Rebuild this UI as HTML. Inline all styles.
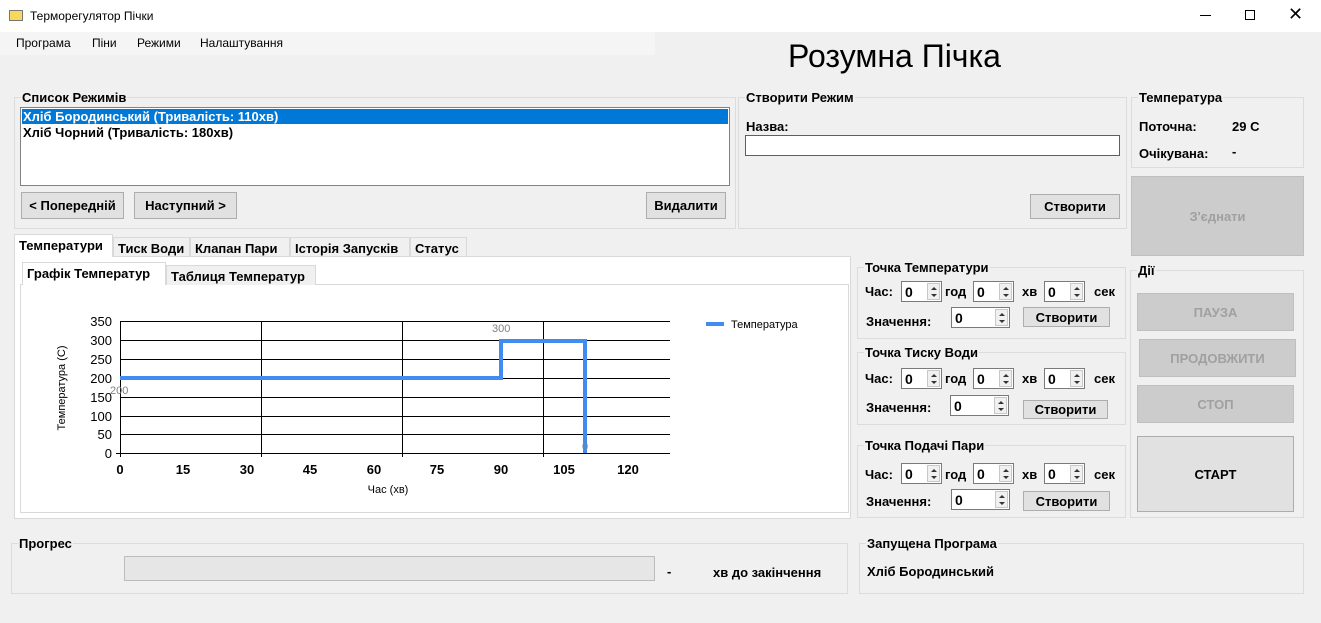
<!DOCTYPE html>
<html><head><meta charset="utf-8"><style>
*{box-sizing:border-box;margin:0;padding:0}
body{width:1321px;height:623px;background:#f0f0f0;font-family:"Liberation Sans",sans-serif;font-size:13px;position:relative;overflow:hidden;color:#000}
.a{position:absolute;white-space:nowrap}
.b{font-weight:bold}
.g{position:absolute;border:1px solid #dcdcdc}
.gt{position:absolute;top:-8px;left:6px;background:#f0f0f0;font-weight:bold;padding:0 1px}
.btn{position:absolute;background:#e1e1e1;border:1px solid #adadad;font-weight:bold;text-align:center;display:flex;align-items:center;justify-content:center}
.dis{background:#cccccc;border:1px solid #bfbfbf;color:#a0a0a0}
.sp{position:absolute;height:21px;background:#fff;border:1px solid #7a7a7a;font-weight:bold;padding:2px 0 0 3px;font-size:14px}
.sp i{position:absolute;right:1px;top:1px;width:13px;height:17px;background:#f0f0f0;border:1px solid #c8c8c8;font-style:normal}
.sp i:before{content:"";position:absolute;left:3px;top:3px;border:3px solid transparent;border-bottom:3px solid #333;border-top:0}
.sp i:after{content:"";position:absolute;left:3px;top:10px;border:3px solid transparent;border-top:3px solid #333;border-bottom:0}
.tab{position:absolute;border:1px solid #d9d9d9;border-bottom:none;background:#f0f0f0;font-weight:bold;padding:3px 4px 0}
</style></head><body>
<div class="a" style="left:0;top:0;width:1321px;height:32px;background:#fff"></div>
<div class="a" style="left:9px;top:10px;width:14px;height:11px;background:#f8d75a;border:1px solid #777"></div>
<div class="a" style="left:30px;top:9px;font-size:12px">Терморегулятор Пічки</div>
<div class="a" style="left:1200px;top:15px;width:11px;height:1px;background:#000"></div>
<div class="a" style="left:1245px;top:10px;width:10px;height:10px;border:1px solid #000"></div>
<div class="a" style="left:1288px;top:4px;font-size:18px">✕</div>
<div class="a" style="left:0;top:32px;width:655px;height:23px;background:#f5f5f5"></div>
<div class="a" style="left:16px;top:36px;font-size:12px">Програма</div>
<div class="a" style="left:92px;top:36px;font-size:12px">Піни</div>
<div class="a" style="left:137px;top:36px;font-size:12px">Режими</div>
<div class="a" style="left:200px;top:36px;font-size:12px">Налаштування</div>
<div class="a" style="left:788px;top:38px;font-size:32px">Розумна Пічка</div>

<div class="g" style="left:14px;top:97px;width:722px;height:132px"><div class="gt">Список Режимів</div></div>
<div class="a" style="left:20px;top:107px;width:710px;height:79px;background:#fff;border:1px solid #828282"></div>
<div class="a b" style="left:22px;top:109px;width:706px;height:15px;background:#0078d7;color:#fff;padding-left:1px;line-height:15px">Хліб Бородинський (Тривалість: 110хв)</div>
<div class="a b" style="left:23px;top:125px;line-height:15px">Хліб Чорний (Тривалість: 180хв)</div>
<div class="btn" style="left:21px;top:192px;width:103px;height:27px">&lt; Попередній</div>
<div class="btn" style="left:134px;top:192px;width:103px;height:27px">Наступний &gt;</div>
<div class="btn" style="left:646px;top:192px;width:80px;height:27px">Видалити</div>

<div class="g" style="left:738px;top:97px;width:389px;height:132px"><div class="gt">Створити Режим</div></div>
<div class="a b" style="left:746px;top:119px">Назва:</div>
<div class="a" style="left:745px;top:135px;width:375px;height:21px;background:#fff;border:1px solid #0078d7"></div>
<div class="btn" style="left:1030px;top:194px;width:90px;height:25px">Створити</div>

<div class="g" style="left:1131px;top:97px;width:173px;height:71px"><div class="gt">Температура</div></div>
<div class="a b" style="left:1139px;top:119px">Поточна:</div>
<div class="a b" style="left:1232px;top:119px">29 C</div>
<div class="a b" style="left:1139px;top:146px">Очікувана:</div>
<div class="a b" style="left:1232px;top:144px">-</div>
<div class="btn dis" style="left:1131px;top:176px;width:173px;height:80px;font-weight:bold">З'єднати</div>

<div class="a" style="left:14px;top:256px;width:837px;height:263px;background:#fff;border:1px solid #d9d9d9"></div>
<div class="tab" style="left:14px;top:234px;width:99px;height:23px;background:#fff;z-index:2">Температури</div>
<div class="tab" style="left:113px;top:237px;width:77px;height:19px">Тиск Води</div>
<div class="tab" style="left:190px;top:237px;width:100px;height:19px">Клапан Пари</div>
<div class="tab" style="left:290px;top:237px;width:120px;height:19px">Історія Запусків</div>
<div class="tab" style="left:410px;top:237px;width:57px;height:19px">Статус</div>
<div class="a" style="left:20px;top:284px;width:829px;height:229px;border:1px solid #d9d9d9;background:#fff"></div>
<div class="tab" style="left:22px;top:262px;width:144px;height:23px;background:#fff;z-index:2">Графік Температур</div>
<div class="tab" style="left:166px;top:265px;width:150px;height:20px">Таблиця Температур</div>

<svg class="a" style="left:0;top:0" width="1321" height="623">
<g stroke="#000" stroke-width="1">
<line x1="120" y1="321.5" x2="670" y2="321.5"/><line x1="120" y1="340.5" x2="670" y2="340.5"/><line x1="120" y1="359.5" x2="670" y2="359.5"/><line x1="120" y1="378.5" x2="670" y2="378.5"/><line x1="120" y1="397.5" x2="670" y2="397.5"/><line x1="120" y1="416.5" x2="670" y2="416.5"/><line x1="120" y1="434.5" x2="670" y2="434.5"/><line x1="116" y1="453.5" x2="670" y2="453.5"/>
<line x1="120.5" y1="321" x2="120.5" y2="457"/><line x1="261.5" y1="321" x2="261.5" y2="457"/><line x1="402.5" y1="321" x2="402.5" y2="457"/><line x1="543.5" y1="321" x2="543.5" y2="457"/>
</g>
<polyline points="120,378 501,378 501,341 585,341 585,453" fill="none" stroke="#418cf0" stroke-width="4"/>
<line x1="706" y1="324" x2="724" y2="324" stroke="#418cf0" stroke-width="4"/>
<g font-family="Liberation Sans" font-size="13" text-anchor="end">
<text x="112" y="326">350</text><text x="112" y="345">300</text><text x="112" y="364">250</text><text x="112" y="383">200</text><text x="112" y="402">150</text><text x="112" y="421">100</text><text x="112" y="439">50</text><text x="112" y="458">0</text></g>
<g font-family="Liberation Sans" font-size="13" font-weight="bold" text-anchor="middle">
<text x="120" y="474">0</text><text x="183" y="474">15</text><text x="247" y="474">30</text><text x="310" y="474">45</text><text x="374" y="474">60</text><text x="437" y="474">75</text><text x="501" y="474">90</text><text x="564" y="474">105</text><text x="628" y="474">120</text></g>
<g font-family="Liberation Sans" font-size="11" fill="#808080"><text x="110" y="394">200</text><text x="492" y="332">300</text><text x="582" y="450">0</text></g>
<text x="731" y="328" font-family="Liberation Sans" font-size="11">Температура</text>
<text x="388" y="493" font-family="Liberation Sans" font-size="11" text-anchor="middle">Час (хв)</text>
<text transform="translate(65,388) rotate(-90)" font-family="Liberation Sans" font-size="11" text-anchor="middle">Температура (С)</text>
</svg>

<div class="g" style="left:857px;top:267px;width:269px;height:72px"><div class="gt">Точка Температури</div></div>
<div class="g" style="left:857px;top:352px;width:269px;height:73px"><div class="gt">Точка Тиску Води</div></div>
<div class="g" style="left:857px;top:445px;width:269px;height:73px"><div class="gt">Точка Подачі Пари</div></div>

<div class="a b" style="left:865px;top:284px">Час:</div><div class="sp" style="left:901px;top:281px;width:41px">0<i></i></div><div class="a b" style="left:945px;top:284px">год</div><div class="sp" style="left:973px;top:281px;width:41px">0<i></i></div><div class="a b" style="left:1022px;top:284px">хв</div><div class="sp" style="left:1044px;top:281px;width:41px">0<i></i></div><div class="a b" style="left:1094px;top:284px">сек</div>
<div class="a b" style="left:866px;top:314px">Значення:</div><div class="sp" style="left:951px;top:307px;width:59px">0<i></i></div><div class="btn" style="left:1023px;top:307px;width:87px;height:20px">Створити</div>

<div class="a b" style="left:865px;top:371px">Час:</div><div class="sp" style="left:901px;top:368px;width:41px">0<i></i></div><div class="a b" style="left:945px;top:371px">год</div><div class="sp" style="left:973px;top:368px;width:41px">0<i></i></div><div class="a b" style="left:1022px;top:371px">хв</div><div class="sp" style="left:1044px;top:368px;width:41px">0<i></i></div><div class="a b" style="left:1094px;top:371px">сек</div>
<div class="a b" style="left:866px;top:400px">Значення:</div><div class="sp" style="left:950px;top:395px;width:59px">0<i></i></div><div class="btn" style="left:1023px;top:400px;width:85px;height:19px">Створити</div>

<div class="a b" style="left:865px;top:467px">Час:</div><div class="sp" style="left:901px;top:463px;width:41px">0<i></i></div><div class="a b" style="left:945px;top:467px">год</div><div class="sp" style="left:973px;top:463px;width:41px">0<i></i></div><div class="a b" style="left:1022px;top:467px">хв</div><div class="sp" style="left:1044px;top:463px;width:41px">0<i></i></div><div class="a b" style="left:1094px;top:467px">сек</div>
<div class="a b" style="left:866px;top:494px">Значення:</div><div class="sp" style="left:951px;top:489px;width:59px">0<i></i></div><div class="btn" style="left:1023px;top:491px;width:87px;height:20px">Створити</div>

<div class="g" style="left:1130px;top:270px;width:174px;height:248px"><div class="gt">Дії</div></div>
<div class="btn dis" style="left:1137px;top:293px;width:157px;height:38px">ПАУЗА</div>
<div class="btn dis" style="left:1139px;top:339px;width:157px;height:38px">ПРОДОВЖИТИ</div>
<div class="btn dis" style="left:1137px;top:385px;width:157px;height:38px">СТОП</div>
<div class="btn" style="left:1137px;top:436px;width:157px;height:76px;background:#e1e1e1">СТАРТ</div>

<div class="g" style="left:11px;top:543px;width:837px;height:51px"><div class="gt">Прогрес</div></div>
<div class="a" style="left:124px;top:556px;width:531px;height:25px;background:#e6e6e6;border:1px solid #bcbcbc"></div>
<div class="a b" style="left:667px;top:564px">-</div>
<div class="a b" style="left:713px;top:565px">хв до закінчення</div>
<div class="g" style="left:859px;top:543px;width:445px;height:51px"><div class="gt">Запущена Програма</div></div>
<div class="a b" style="left:867px;top:564px">Хліб Бородинський</div>
</body></html>
